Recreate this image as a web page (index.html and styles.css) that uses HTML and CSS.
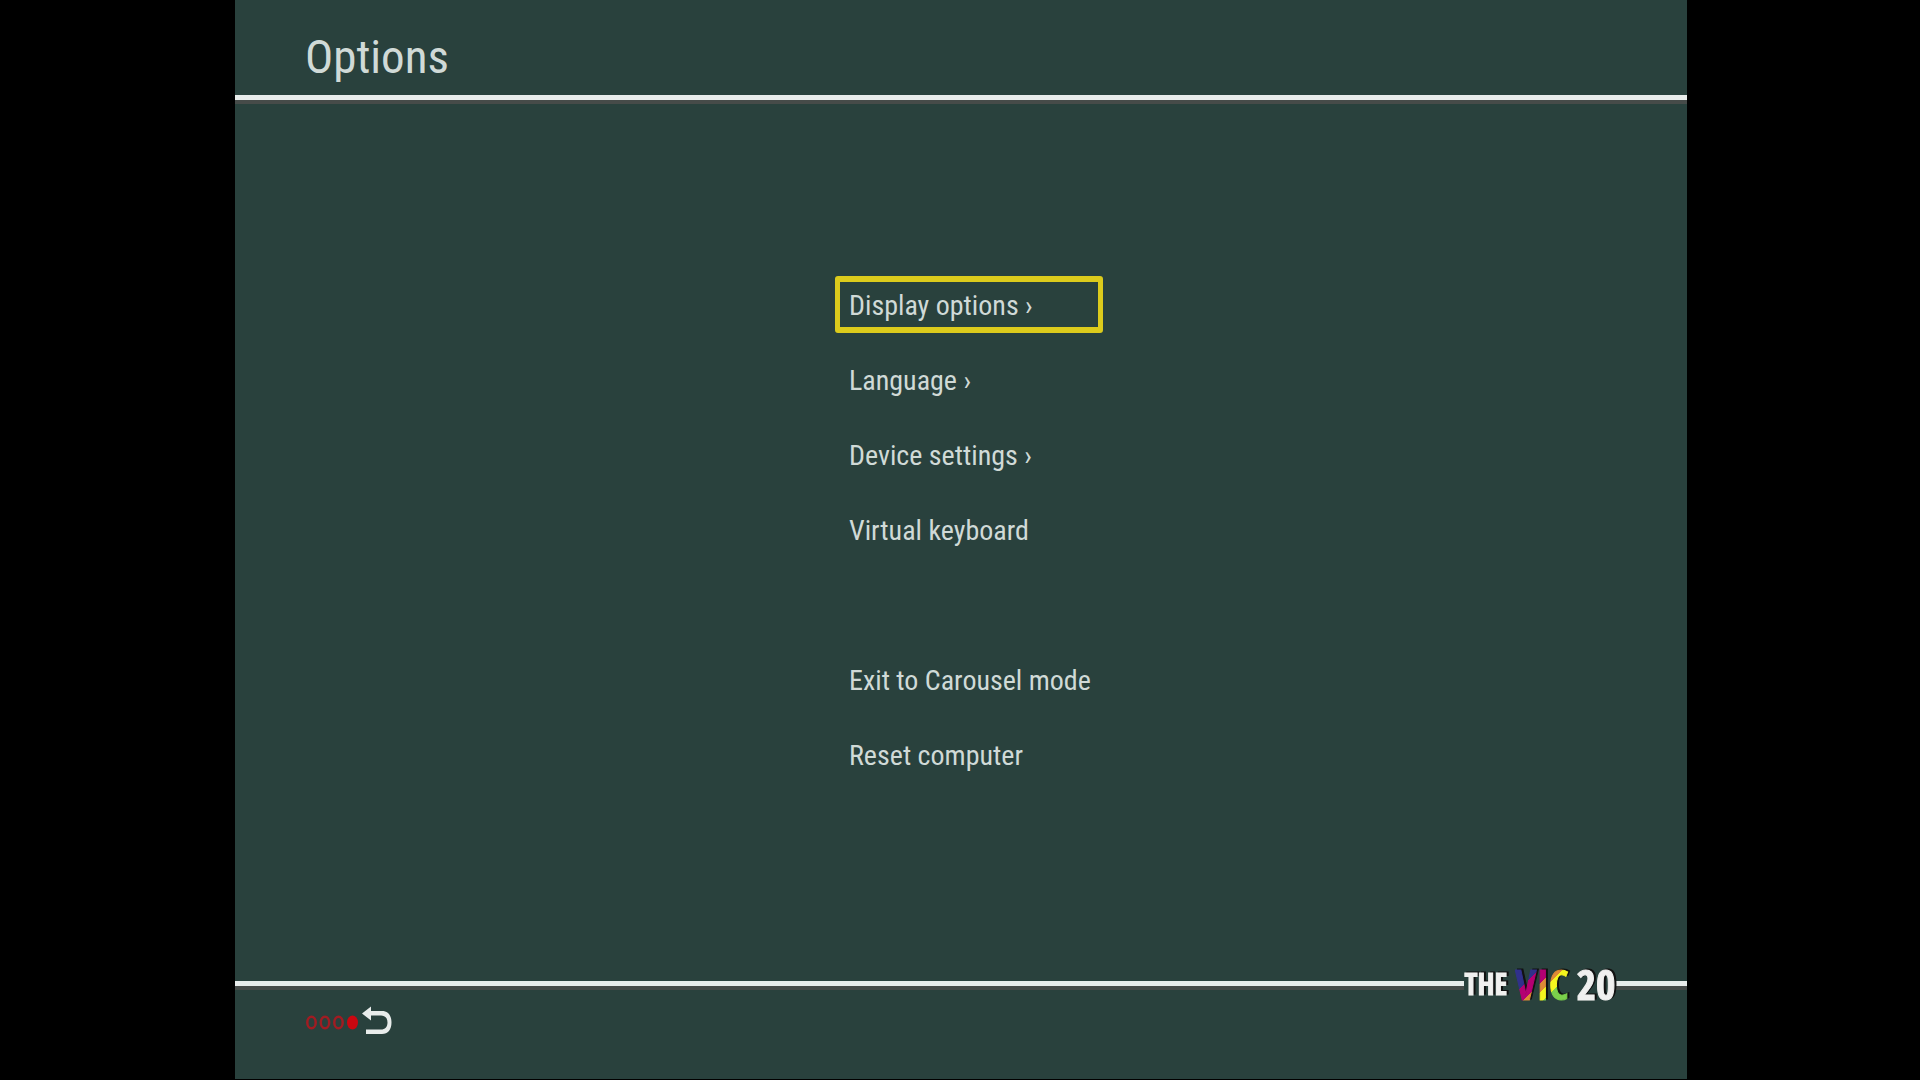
FILE: index.html
```html
<!DOCTYPE html>
<html lang="en">
<head>
<meta charset="utf-8">
<title>Options</title>
<link rel="stylesheet" href="styles.css">
</head>
<body>
<div class="screen">
  <header class="header">
    <h1 class="title">Options</h1>
    <div class="rule"></div>
  </header>
  <main class="main">
    <nav class="menu" aria-label="Options">
      <button class="item item-selected" type="button">Display options ›</button>
      <button class="item" type="button">Language ›</button>
      <button class="item" type="button">Device settings ›</button>
      <button class="item" type="button">Virtual keyboard</button>
      <button class="item item-group" type="button">Exit to Carousel mode</button>
      <button class="item" type="button">Reset computer</button>
    </nav>
  </main>
  <footer class="footer">
    <div class="brand-row">
      <div class="rule rule-grow"></div>
      <div class="logo"><span class="logo-the">THE</span><span class="logo-vic">VIC</span><span class="logo-num">20</span></div>
      <div class="rule rule-end"></div>
    </div>
    <button class="back" type="button" aria-label="Back">
      <svg width="88" height="30" viewBox="0 0 88 30">
        <g fill="none" stroke="#a01c22" stroke-width="2.5">
          <ellipse cx="6.5" cy="16.5" rx="4.2" ry="5.8"/>
          <ellipse cx="20" cy="16.5" rx="4.2" ry="5.8"/>
          <ellipse cx="33.5" cy="16.5" rx="4.2" ry="5.8"/>
        </g>
        <ellipse cx="47.5" cy="16.5" rx="5.5" ry="7" fill="#cb0710"/>
        <path d="M57 7.500 66 0.500V5H77C83 5 86.500 9.500 86.500 16.500S83 28 77 28H61V23.500H76C80 23.500 82.500 21 82.500 16.500S80 9.500 76 9.500H66V14.500Z" fill="#e8eceb"/>
      </svg>
    </button>
  </footer>
</div>
</body>
</html>
```
FILE: styles.css
```css
* { box-sizing: border-box; }

body {
  margin: 0;
  padding: 0 233px 1px 235px;
  background: #000;
  color: #d0dad7;
  font-family: "Roboto Condensed", Roboto, sans-serif;
}

.screen {
  display: flex;
  flex-direction: column;
  min-height: calc(100vh - 1px);
  background: #29413d;
}

.title {
  margin: 0;
  padding: 25px 70px 6px;
  font-size: 47px;
  line-height: 64px;
  font-weight: 400;
}

.rule {
  height: 9px;
  background: #e8eceb;
  border-bottom: 4px solid #464b49;
}

.main {
  display: flex;
  flex: 1;
  justify-content: center;
  padding: 172px 0 40px 16px;
}

.menu {
  display: flex;
  flex-direction: column;
  align-items: stretch;
  gap: 18px;
  width: 268px;
}

.item {
  height: 57px;
  padding: 2px 0 0 9px;
  border: 6px solid transparent;
  border-width: 6px 5px;
  border-radius: 3px;
  background: none;
  color: inherit;
  font: inherit;
  font-size: 28px;
  line-height: 43px;
  text-align: left;
  white-space: nowrap;
}

.item-selected { border-color: #dccb1c; }

.item-group { margin-top: 75px; }

.brand-row {
  display: flex;
  align-items: center;
  height: 42px;
}

.rule-grow { flex: 1; }

.rule-end { width: 71px; }

.logo {
  display: flex;
  align-items: center;
  justify-content: center;
  gap: 8px;
  width: 152px;
  padding-bottom: 3px;
  font-family: "Open Sans Condensed", "Roboto Condensed", sans-serif;
  font-weight: 700;
  font-size: 42px;
  line-height: 42px;
  color: #f0f0ef;
  -webkit-text-stroke: 1px #f0f0ef;
  filter: drop-shadow(2px -1px 0 #111);
}

.logo-the { font-size: 30px; }

.logo-vic {
  background: linear-gradient(135deg, #30308b 32%, #b40072 32% 47%, #de8a36 47% 57%, #f4f51e 57% 68%, #7bd04b 68%);
  background-clip: text;
  -webkit-background-clip: text;
  -webkit-text-stroke-color: transparent;
  color: transparent;
}

.back {
  display: block;
  margin: 0 0 43px 70px;
  padding: 0;
  border: 0;
  background: none;
}

.back svg { display: block; }
```
